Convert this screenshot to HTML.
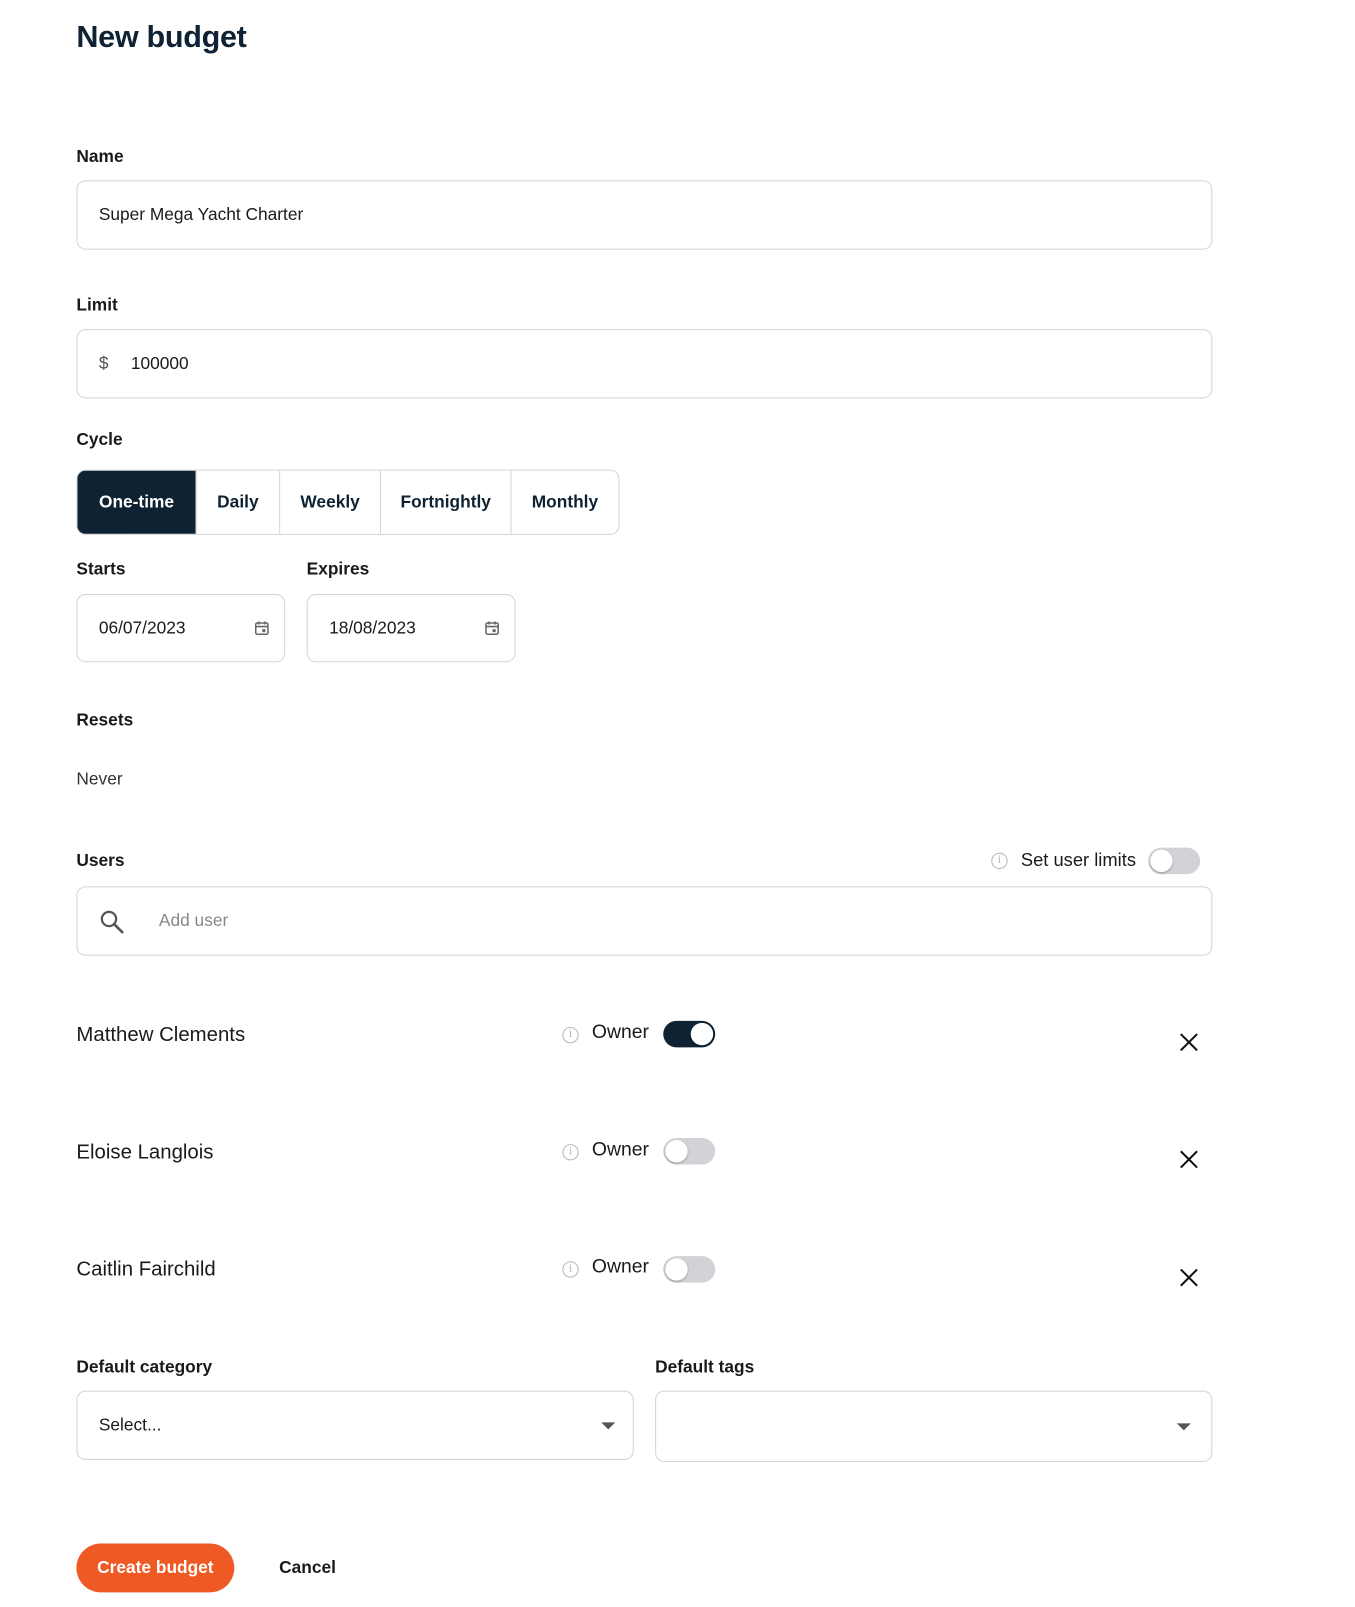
<!DOCTYPE html>
<html><head><meta charset="utf-8"><style>
*{box-sizing:border-box;margin:0;padding:0}
body{width:1355px;height:1600px;background:#fff;font-family:"Liberation Sans",Arial,sans-serif;color:#111;position:relative;overflow:hidden}
#w{position:absolute;left:0;top:0;width:1330px;height:1571px;transform:scale(1.0188);transform-origin:0 0}
#lo{position:absolute;left:0;top:6px;width:1330px;height:1571px}
.a{position:absolute}
h1{position:absolute;left:75px;top:20px;font-size:30px;font-weight:bold;color:#0e2233;letter-spacing:-0.3px}
.lbl{position:absolute;left:75px;font-size:17px;font-weight:bold;color:#1a1a1a}
.inp{position:absolute;border:1.5px solid #d4d4d4;border-radius:9px;background:#fff;font-size:17px;color:#1a1a1a;display:flex;align-items:center;padding-left:21px}
.seg{position:absolute;left:75px;top:461px;height:64px;display:flex;border:1.5px solid #d4d4d4;border-radius:9px;overflow:hidden}
.seg div{display:flex;align-items:center;justify-content:center;font-size:17px;font-weight:bold;color:#0e2233;border-left:1.5px solid #d4d4d4}
.seg div:first-child{border-left:none;background:#0e2233;color:#fff}
.tog{position:absolute;width:51px;height:26px;border-radius:13px;background:#d1d3d6}
.tog::after{content:"";position:absolute;left:2px;top:2px;width:22px;height:22px;border-radius:50%;background:#fff;box-shadow:0 1px 2px rgba(0,0,0,.3)}
.tog.on{background:#0e2233}.tog.on::after{left:27px}
.info{position:absolute;width:16px;height:16px;border:1.3px solid #b5b5b5;border-radius:50%;font-size:10px;color:#b5b5b5;text-align:center;line-height:14px;font-family:"DejaVu Serif",serif}
.user{position:absolute;left:75px;font-size:20px;color:#1a1a1a}
.own{position:absolute;left:581px;font-size:19px;color:#1a1a1a}
.x{position:absolute;left:1157px;width:20px;height:20px}
</style></head><body><div id="w">
<h1>New budget</h1>
<div class="lbl" style="top:144px">Name</div>
<div class="inp" style="left:75px;top:177px;width:1115px;height:68px">Super Mega Yacht Charter</div>
<div class="lbl" style="top:290px">Limit</div>
<div class="inp" style="left:75px;top:323px;width:1115px;height:68px"><span style="color:#555;margin-right:22px">$</span>100000</div>
<div class="lbl" style="top:422px">Cycle</div>
<div class="seg"><div style="width:116px">One-time</div><div style="width:82px">Daily</div><div style="width:99px">Weekly</div><div style="width:128px">Fortnightly</div><div style="width:106px">Monthly</div></div>
<div class="lbl" style="top:549px">Starts</div>
<div class="lbl" style="top:549px;left:301px">Expires</div>
<div class="inp" style="left:75px;top:583px;width:205px;height:67px">06/07/2023
<svg class="a" style="left:174px;top:25px" width="14" height="15" viewBox="0 0 14 15"><rect x="1" y="2.5" width="12" height="11" rx="1.5" fill="none" stroke="#666" stroke-width="1.5"/><path d="M1 6h12M4 1v3M10 1v3" stroke="#666" stroke-width="1.5"/><rect x="7.5" y="8.5" width="3" height="3" fill="#666"/></svg></div>
<div class="inp" style="left:301px;top:583px;width:205px;height:67px">18/08/2023
<svg class="a" style="left:174px;top:25px" width="14" height="15" viewBox="0 0 14 15"><rect x="1" y="2.5" width="12" height="11" rx="1.5" fill="none" stroke="#666" stroke-width="1.5"/><path d="M1 6h12M4 1v3M10 1v3" stroke="#666" stroke-width="1.5"/><rect x="7.5" y="8.5" width="3" height="3" fill="#666"/></svg></div>
<div id="lo">
<div class="lbl" style="top:691px">Resets</div>
<div class="a" style="left:75px;top:749px;font-size:17px;color:#333">Never</div>
<div class="lbl" style="top:829px">Users</div>
<div class="info" style="left:973px;top:831px">i</div>
<div class="a" style="left:1002px;top:828px;font-size:18px;color:#1a1a1a">Set user limits</div>
<div class="tog" style="left:1127px;top:826px"></div>
<div class="inp" style="left:75px;top:864px;width:1115px;height:68px;padding-left:80px;color:#888">
<svg class="a" style="left:21px;top:21px" width="26" height="26" viewBox="0 0 26 26"><circle cx="10" cy="10" r="7" fill="none" stroke="#555" stroke-width="2.2"/><path d="M15 15l8 8" stroke="#555" stroke-width="2.6" stroke-linecap="round"/></svg>Add user</div>

<div class="user" style="top:999px">Matthew Clements</div>
<div class="info" style="left:552px;top:1002px">i</div><div class="own" style="top:997px">Owner</div>
<div class="tog on" style="left:651px;top:996px"></div>
<svg class="x" style="top:1007px" viewBox="0 0 20 20"><path d="M2 2l16 16M18 2L2 18" stroke="#111" stroke-width="2"/></svg>

<div class="user" style="top:1114px">Eloise Langlois</div>
<div class="info" style="left:552px;top:1117px">i</div><div class="own" style="top:1112px">Owner</div>
<div class="tog" style="left:651px;top:1111px"></div>
<svg class="x" style="top:1122px" viewBox="0 0 20 20"><path d="M2 2l16 16M18 2L2 18" stroke="#111" stroke-width="2"/></svg>

<div class="user" style="top:1229px">Caitlin Fairchild</div>
<div class="info" style="left:552px;top:1232px">i</div><div class="own" style="top:1227px">Owner</div>
<div class="tog" style="left:651px;top:1227px"></div>
<svg class="x" style="top:1238px" viewBox="0 0 20 20"><path d="M2 2l16 16M18 2L2 18" stroke="#111" stroke-width="2"/></svg>

<div class="lbl" style="top:1326px">Default category</div>
<div class="lbl" style="top:1326px;left:643px">Default tags</div>
<div class="inp" style="left:75px;top:1359px;width:547px;height:68px">Select...
<svg class="a" style="left:514px;top:30px" width="14" height="8"><path d="M0 0h14L7 7z" fill="#555"/></svg></div>
<div class="inp" style="left:643px;top:1359px;width:547px;height:70px">
<svg class="a" style="left:511px;top:31px" width="14" height="8"><path d="M0 0h14L7 7z" fill="#555"/></svg></div>

<div class="a" style="left:75px;top:1509px;width:155px;height:48px;border-radius:24px;background:#ef5a24;color:#fff;font-size:17px;font-weight:bold;display:flex;align-items:center;justify-content:center">Create budget</div>
<div class="a" style="left:274px;top:1523px;font-size:17px;font-weight:bold;color:#1a1a1a">Cancel</div>
</div>
</div></body></html>
